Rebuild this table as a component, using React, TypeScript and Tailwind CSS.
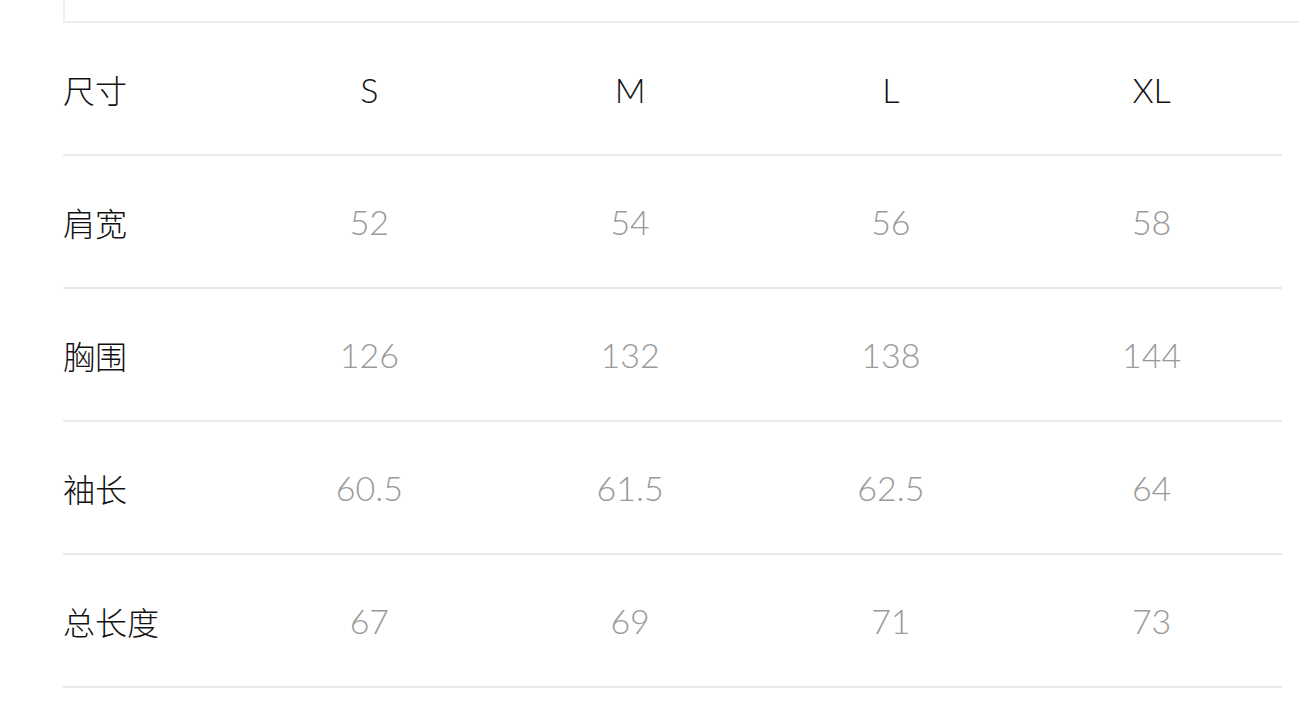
import React from "react";

const rows: { label: string; values: string[] }[] = [
  { label: "肩宽", values: ["52", "54", "56", "58"] },
  { label: "胸围", values: ["126", "132", "138", "144"] },
  { label: "袖长", values: ["60.5", "61.5", "62.5", "64"] },
  { label: "总长度", values: ["67", "69", "71", "73"] },
];

const sizes = ["S", "M", "L", "XL"];

const cjk = { fontFamily: '"Noto Sans CJK SC", "Noto Sans", sans-serif' };
const latin = { fontFamily: 'Lato, "Noto Sans", sans-serif' };

export default function App() {
  return (
    <div className="w-[1299px] h-[711px] bg-white overflow-hidden pl-[63px]">
      <div className="h-[23px] w-[1300px] border-l-2 border-b-2 border-[#ededed]" />
      <div className="w-[1219px]">
        <div className="h-[133px] flex items-center border-b-2 border-[#e9e9e9] pt-[1px]">
          <div className="w-[176px] text-[32px] text-[#111111] font-light" style={cjk}>
            尺寸
          </div>
          {sizes.map((s) => (
            <div
              key={s}
              className="w-[260.75px] text-center text-[34px] font-light text-[#111111]"
              style={latin}
            >
              {s}
            </div>
          ))}
        </div>
        {rows.map((r) => (
          <div
            key={r.label}
            className="h-[133px] flex items-center border-b-2 border-[#e9e9e9]"
          >
            <div className="w-[176px] text-[32px] text-[#111111] font-light" style={cjk}>
              {r.label}
            </div>
            {r.values.map((v, i) => (
              <div
                key={i}
                className="w-[260.75px] text-center text-[34px] font-light text-[#9a9a9a]"
                style={latin}
              >
                {v}
              </div>
            ))}
          </div>
        ))}
      </div>
    </div>
  );
}
